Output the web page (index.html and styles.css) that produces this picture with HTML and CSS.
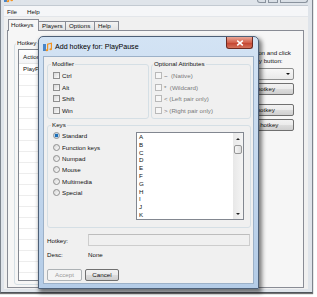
FILE: index.html
```html
<!DOCTYPE html>
<html lang="en">
<head>
  <meta charset="UTF-8">
  <meta name="viewport" content="width=device-width, initial-scale=1.0">
  <title>MPH - Add hotkey</title>
  <link rel="stylesheet" href="styles.css">
</head>
<body>
  <div class="desktop">

    <!-- main window (inactive, behind) -->
    <div class="window main">
      <div class="caption">
        <svg class="app-icon" viewBox="0 0 9 10" width="9" height="10">
          <rect x="0" y="2" width="3" height="7" fill="#4a86c8"/>
          <path d="M4.6 8 V2.2 L8.4 1.2 V7" stroke="#f29422" stroke-width="1.2" fill="none"/>
          <ellipse cx="3.9" cy="8.2" rx="1.3" ry="1" fill="#f29422"/>
          <ellipse cx="7.7" cy="7.2" rx="1.3" ry="1" fill="#f29422"/>
        </svg>
        <span class="caption-text">MPH</span>
        <div class="caption-buttons">
          <span class="cbtn min"></span>
          <span class="cbtn max"></span>
          <span class="cbtn close"></span>
        </div>
      </div>
      <div class="client">
        <div class="menubar"><span>File</span><span>Help</span></div>
        <div class="tabs">
          <div class="tab active">Hotkeys</div>
          <div class="tab players">Players</div>
          <div class="tab options">Options</div>
          <div class="tab help">Help</div>
        </div>
        <div class="tabpage">
          <fieldset class="group hotkey-group">
            <legend>Hotkey</legend>
            <div class="listview">
              <div class="lv-head"><span class="col-action">Action</span><span>Hotkey</span></div>
              <div class="lv-body">
                <div class="lv-row">PlayPause</div>
              </div>
            </div>
          </fieldset>
          <div class="side">
            <p class="hint">Select an action and click<br>the Add hotkey button:</p>
            <div class="combo"><span class="arrow"></span></div>
            <button class="btn side-btn add">Add hotkey</button>
            <button class="btn side-btn edit">Edit hotkey</button>
            <button class="btn side-btn del">Delete hotkey</button>
          </div>
        </div>
      </div>
    </div>

    <!-- add hotkey dialog -->
    <div class="window dialog">
      <div class="dlg-title">
        <svg class="app-icon" viewBox="0 0 9 10" width="9" height="10">
          <rect x="0" y="2" width="3" height="7" fill="#4a86c8"/>
          <path d="M4.6 8 V2.2 L8.4 1.2 V7" stroke="#f29422" stroke-width="1.2" fill="none"/>
          <ellipse cx="3.9" cy="8.2" rx="1.3" ry="1" fill="#f29422"/>
          <ellipse cx="7.7" cy="7.2" rx="1.3" ry="1" fill="#f29422"/>
        </svg>
        <span class="dlg-title-text">Add hotkey for: PlayPause</span>
        <span class="dlg-close">
          <svg viewBox="0 0 8 6" width="8" height="6"><path d="M1.2 0.6 L6.8 5.4 M6.8 0.6 L1.2 5.4" stroke="#fff" stroke-width="1.5"/></svg>
        </span>
      </div>
      <div class="dlg-client">
        <div class="group-row">
          <fieldset class="group modifier">
            <legend>Modifier</legend>
            <label class="check"><span class="box"></span>Ctrl</label>
            <label class="check"><span class="box"></span>Alt</label>
            <label class="check"><span class="box"></span>Shift</label>
            <label class="check"><span class="box"></span>Win</label>
          </fieldset>
          <fieldset class="group optional">
            <legend>Optional Attributes</legend>
            <label class="check off"><span class="box"></span>~&nbsp; (Native)</label>
            <label class="check off"><span class="box"></span>*&nbsp; (Wildcard)</label>
            <label class="check off"><span class="box"></span>&lt; (Left pair only)</label>
            <label class="check off"><span class="box"></span>&gt; (Right pair only)</label>
          </fieldset>
        </div>

        <fieldset class="group keys">
          <legend>Keys</legend>
          <div class="keys-body">
            <div class="radios">
              <label class="radio checked"><span class="dot"></span>Standard</label>
              <label class="radio"><span class="dot"></span>Function keys</label>
              <label class="radio"><span class="dot"></span>Numpad</label>
              <label class="radio"><span class="dot"></span>Mouse</label>
              <label class="radio"><span class="dot"></span>Multimedia</label>
              <label class="radio"><span class="dot"></span>Special</label>
            </div>
            <div class="listbox">
              <ul class="items">
                <li>A</li><li>B</li><li>C</li><li>D</li><li>E</li><li>F</li>
                <li>G</li><li>H</li><li>I</li><li>J</li><li>K</li>
              </ul>
              <div class="vscroll">
                <span class="sb-btn up"><span class="tri-up"></span></span>
                <span class="thumb"></span>
                <span class="sb-btn down"><span class="tri-down"></span></span>
              </div>
            </div>
          </div>
        </fieldset>

        <div class="field hotkey-field">
          <span class="field-label">Hotkey:</span>
          <span class="textbox"></span>
        </div>
        <div class="field desc-field">
          <span class="field-label">Desc:</span>
          <span>None</span>
        </div>
        <div class="actions">
          <button class="btn accept" disabled>Accept</button>
          <button class="btn cancel">Cancel</button>
        </div>
      </div>
    </div>

  </div>
</body>
</html>
```

FILE: styles.css
```css
* {
  box-sizing: border-box;
}
body {
  margin: 0;
  background: #fff;
  font-family: "Liberation Sans", Arial, sans-serif;
  font-size: 6.2px;
  color: #111;
  overflow: hidden;
}
.desktop {
  position: relative;
  width: 317px;
  height: 297px;
  overflow: hidden;
}
.window {
  position: absolute;
}

/* ---------- main window ---------- */
.main {
  left: 0;
  top: -11px;
  width: 313px;
  height: 304px;
  border: 1px solid #7d848d;
  border-bottom-color: #4f545b;
  padding: 0 4px 3px 3px;
  background: #dfe4ea;
  display: flex;
  flex-direction: column;
  box-shadow: 0 1px 1px rgba(0, 0, 0, 0.55);
}
.caption {
  height: 21px;
  display: flex;
  align-items: center;
  gap: 3px;
}
.caption-text {
  font-size: 7.1px;
  color: #222;
}
.caption-buttons {
  margin-left: auto;
  align-self: flex-start;
  display: flex;
  gap: 2px;
}
.cbtn {
  height: 13px;
  border: 1px solid #8a939e;
  border-top: none;
  background: linear-gradient(#eef1f5, #d7dde4);
}
.cbtn.min {
  width: 9px;
  border-radius: 0 0 0 3px;
}
.cbtn.max {
  width: 10px;
}
.cbtn.close {
  width: 28px;
  border-radius: 0 0 3px 0;
}
.client {
  flex: 1;
  display: flex;
  flex-direction: column;
  background: #f0f0f0;
}
.menubar {
  height: 12px;
  display: flex;
  align-items: center;
  gap: 10px;
  padding-left: 3px;
  background: #f5f6f8;
  border-top: 1px solid #c3cad2;
  border-bottom: 1px solid #e3e6ea;
}
.tabs {
  margin: 2px 0 0 4px;
  height: 11px;
  display: flex;
  align-items: flex-end;
}
.tab {
  height: 9px;
  line-height: 7px;
  padding-left: 3px;
  border: 1px solid #898c95;
  border-bottom: none;
  margin-left: -1px;
  background: linear-gradient(#f3f3f3, #e2e2e2);
}
.tab.active {
  position: relative;
  width: 31px;
  height: 12px;
  line-height: 10px;
  padding-left: 2px;
  margin-left: 0;
  margin-bottom: -1px;
  background: #f6f6f6;
}
.tab.players { width: 28px; }
.tab.options { width: 30px; }
.tab.help { width: 25px; }
.tabpage {
  flex: 1;
  margin: 0 4px 1px 3px;
  border: 1px solid #898c95;
  background: #f6f6f6;
  display: flex;
  padding: 8px 9px 2px 6px;
}

/* group boxes */
.group {
  margin: 0;
  min-width: 0;
  border: 1px solid #d5dfe5;
  border-radius: 3px;
  padding: 2px 0 2px 5px;
}
.group legend {
  padding: 0 1px;
  margin-left: -2px;
  line-height: 8px;
}
.hotkey-group {
  flex: 1;
  margin-right: 4px;
  padding: 2px 3px 3px 3px;
}
.listview {
  height: 232px;
  border: 1px solid #828790;
  background: #fff;
}
.lv-head {
  height: 14px;
  display: flex;
  align-items: center;
  padding-left: 4px;
  border-bottom: 1px solid #e5e5e5;
  background: linear-gradient(#fff, #f3f4f6);
}
.col-action {
  width: 80px;
}
.lv-body {
  height: 216px;
  background: repeating-linear-gradient(to bottom, transparent 0 10px, #ededed 10px 11px);
}
.lv-row {
  height: 10px;
  line-height: 10px;
  padding-left: 4px;
}
.side {
  width: 73px;
  margin-top: 10px;
  display: flex;
  flex-direction: column;
}
.hint {
  margin: 0;
  line-height: 8px;
  white-space: nowrap;
}
.combo {
  margin: 3px 0 0 4px;
  height: 12px;
  border: 1px solid #8e8f8f;
  border-radius: 2px;
  background: linear-gradient(#f7f7f7, #e9e9e9);
  display: flex;
  align-items: center;
  justify-content: flex-end;
  padding-right: 3px;
}
.combo .arrow {
  width: 0;
  height: 0;
  border-left: 2px solid transparent;
  border-right: 2px solid transparent;
  border-top: 2px solid #111;
}

/* buttons */
.btn {
  font: inherit;
  color: #111;
  height: 12px;
  padding: 0;
  border: 1px solid #707070;
  border-radius: 2px;
  background: linear-gradient(#f2f2f2 0%, #ebebeb 50%, #dddddd 50%, #cfcfcf 100%);
  line-height: 10px;
}
.btn:disabled {
  color: #9a9a9a;
  border-color: #adb2b5;
  background: #f4f4f4;
}
.side-btn {
  margin-left: 4px;
  width: 69px;
}
.side-btn.add { margin-top: 3px; }
.side-btn.edit { margin-top: 9px; }
.side-btn.del { margin-top: 3px; }

/* ---------- dialog ---------- */
.dialog {
  left: 38px;
  top: 36px;
  width: 221px;
  height: 253px;
  border: 1px solid #4d6078;
  border-radius: 5px 5px 0 0;
  padding: 0 4px 4px;
  background: linear-gradient(#d3e3f4, #b4cce7);
  display: flex;
  flex-direction: column;
  box-shadow: 2px 3px 4px 1px rgba(0, 0, 0, 0.5);
}
.dlg-title {
  height: 19px;
  display: flex;
  align-items: center;
  gap: 3px;
}
.dlg-title-text {
  font-size: 7.1px;
  color: #000;
}
.dlg-close {
  margin-left: auto;
  margin-right: 1px;
  align-self: flex-start;
  width: 27px;
  height: 12px;
  border: 1px solid #6d2a22;
  border-top: none;
  border-radius: 0 0 3px 3px;
  background: linear-gradient(#eaa797, #d2604b 50%, #c2402c 51%, #d5735c);
  display: flex;
  align-items: center;
  justify-content: center;
}
.dlg-client {
  flex: 1;
  border: 1px solid #9cb1c8;
  background: #f0f0f0;
  padding: 3px 2px 2px 3px;
  display: flex;
  flex-direction: column;
}
.group-row {
  display: flex;
  gap: 2px;
}
.group-row .group {
  flex: 1;
}
.optional {
  padding-left: 3px;
}
.check,
.radio {
  display: flex;
  align-items: center;
  gap: 2px;
  height: 11.5px;
}
.box {
  width: 7px;
  height: 7px;
  border: 1px solid #8f8f8f;
  background: linear-gradient(135deg, #d8d8d8, #fbfbfb);
}
.check.off {
  color: #7a7a7a;
}
.check.off .box {
  border-color: #b9b9b9;
  background: #f6f6f6;
}
.keys {
  margin-top: 2px;
  padding: 1px 6px 7px 5px;
}
.keys-body {
  display: flex;
  align-items: flex-start;
}
.radios {
  width: 83px;
}
.radio {
  height: 11.4px;
}
.dot {
  width: 7px;
  height: 7px;
  border-radius: 50%;
  border: 1px solid #8f8f8f;
  background: linear-gradient(135deg, #d6d6d6, #fbfbfb);
}
.radio.checked .dot {
  background: radial-gradient(circle, #1d6fb8 0 1.6px, #bcd7ee 2px, #eef4fa 3px);
}
.listbox {
  margin-top: 2px;
  width: 108px;
  height: 88px;
  border: 1px solid #828790;
  background: #fff;
  display: flex;
}
.items {
  flex: 1;
  list-style: none;
  margin: 0;
  padding: 0 0 0 2px;
  line-height: 7.8px;
  overflow: hidden;
}
.vscroll {
  width: 10px;
  display: flex;
  flex-direction: column;
  background: linear-gradient(to right, #e8e8e8, #f4f4f4);
}
.sb-btn {
  display: flex;
  align-items: center;
  justify-content: center;
}
.sb-btn.up {
  height: 12px;
}
.sb-btn.down {
  margin-top: auto;
  height: 10px;
}
.tri-up {
  border-left: 2px solid transparent;
  border-right: 2px solid transparent;
  border-bottom: 2px solid #222;
}
.tri-down {
  border-left: 2px solid transparent;
  border-right: 2px solid transparent;
  border-top: 2px solid #222;
}
.thumb {
  margin: 0 1px;
  height: 9px;
  border: 1px solid #979797;
  border-radius: 2px;
  background: linear-gradient(to right, #f6f6f6, #dedede);
}
.field {
  display: flex;
  align-items: center;
}
.field-label {
  width: 41px;
}
.hotkey-field {
  margin-top: 6px;
  height: 12px;
}
.textbox {
  flex: 1;
  height: 12px;
  margin-right: 1px;
  border: 1px solid #cdcdcd;
  border-top-color: #bdbdbd;
  background: #f0f0f0;
}
.desc-field {
  margin-top: 4px;
  height: 8px;
}
.actions {
  margin-top: 11px;
  display: flex;
  gap: 3px;
}
.accept { width: 35px; }
.cancel { width: 34px; }
```
